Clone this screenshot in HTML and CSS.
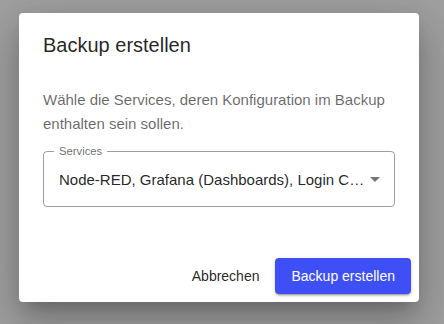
FILE: index.html
```html
<!DOCTYPE html>
<html lang="de">
<head>
    <meta charset="UTF-8">
    <meta name="viewport" content="width=device-width, initial-scale=1.0">
    <title>Backup erstellen</title>
    <link rel="stylesheet" href="styles.css">
</head>
<body>
    <div class="dialog" role="dialog" aria-labelledby="dialogTitle">
        <h2 class="dialog-title" id="dialogTitle">Backup erstellen</h2>

        <div class="dialog-content">
            <p class="dialog-text">Wähle die Services, deren Konfiguration im Backup enthalten sein sollen.</p>

            <div class="select-field">
                <span class="select-label">Services</span>
                <div class="select-value">Node-RED, Grafana (Dashboards), Login Customizing, Mosquitto</div>
                <svg class="select-icon" viewBox="0 0 24 24" width="24" height="24" aria-hidden="true">
                    <path d="M7 10l5 5 5-5z"></path>
                </svg>
            </div>
        </div>

        <div class="dialog-actions">
            <button type="button" class="btn btn-text">Abbrechen</button>
            <button type="button" class="btn btn-primary">Backup erstellen</button>
        </div>
    </div>
</body>
</html>
```

FILE: styles.css
```css
* {
    margin: 0;
    padding: 0;
    box-sizing: border-box;
}

html {
    background: #a0a0a0;
}

body {
    font-family: 'Liberation Sans', Arial, sans-serif;
    background: #a0a0a0;
    color: rgba(0, 0, 0, 0.87);
    padding: 13px 0 0 19px;
    min-height: 100vh;
    overflow: hidden;
}

.dialog {
    width: 400px;
    height: 289px;
    background: #fff;
    border-radius: 4px;
    display: flex;
    flex-direction: column;
    box-shadow: 0 11px 15px -7px rgba(0, 0, 0, 0.2),
                0 24px 38px 3px rgba(0, 0, 0, 0.14),
                0 9px 46px 8px rgba(0, 0, 0, 0.12);
}

.dialog-title {
    padding: 16px 24px;
    font-size: 20px;
    font-weight: 400;
    line-height: 32px;
}

.dialog-content {
    padding: 11px 24px 0;
}

.dialog-text {
    font-size: 15px;
    line-height: 24px;
    color: rgba(0, 0, 0, 0.6);
}

.select-field {
    position: relative;
    margin-top: 15px;
    height: 56px;
    border: 1px solid rgba(0, 0, 0, 0.38);
    border-radius: 4px;
    display: flex;
    align-items: center;
    padding: 0 26px 0 15px;
}

.select-label {
    position: absolute;
    top: -8px;
    left: 10px;
    padding: 0 5px;
    background: #fff;
    font-size: 11.25px;
    line-height: 14px;
    color: rgba(0, 0, 0, 0.6);
}

.select-value {
    font-size: 15px;
    line-height: 23px;
    white-space: nowrap;
    overflow: hidden;
    text-overflow: ellipsis;
}

.select-icon {
    position: absolute;
    right: 7px;
    top: 15px;
    fill: rgba(0, 0, 0, 0.54);
}

.dialog-actions {
    display: flex;
    justify-content: flex-end;
    gap: 8px;
    padding: 51px 8px 8px;
}

.btn {
    font-family: inherit;
    font-size: 14px;
    font-weight: 400;
    line-height: 24px;
    height: 36px;
    border: none;
    border-radius: 4px;
    background: none;
    cursor: pointer;
}

.btn-text {
    padding: 6px 8px;
    color: rgba(0, 0, 0, 0.87);
}

.btn-primary {
    padding: 6px 16px;
    background: #3d4ff5;
    color: #fff;
    box-shadow: 0 3px 1px -2px rgba(0, 0, 0, 0.2),
                0 2px 2px 0 rgba(0, 0, 0, 0.14),
                0 1px 5px 0 rgba(0, 0, 0, 0.12);
}
```
